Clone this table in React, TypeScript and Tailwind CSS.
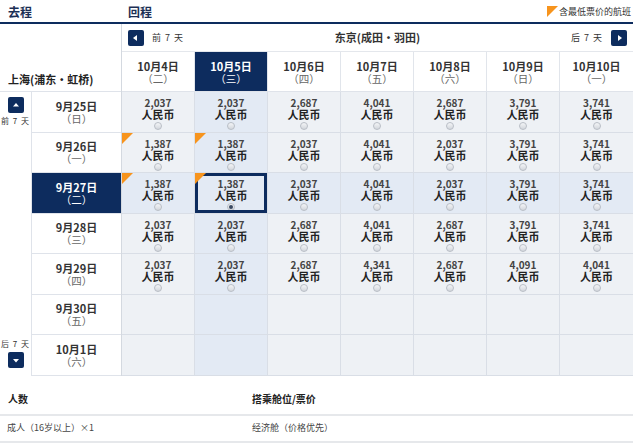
import React from "react";

const cols = [
  ["10月4日", "（二）"],
  ["10月5日", "（三）"],
  ["10月6日", "（四）"],
  ["10月7日", "（五）"],
  ["10月8日", "（六）"],
  ["10月9日", "（日）"],
  ["10月10日", "（一）"],
];

type Cell = { p: string; tri?: boolean } | null;

const rows: { d: string; w: string; cells: Cell[] }[] = [
  { d: "9月25日", w: "（日）", cells: ["2,037", "2,037", "2,687", "4,041", "2,687", "3,791", "3,741"].map((p) => ({ p })) },
  {
    d: "9月26日",
    w: "（一）",
    cells: [{ p: "1,387", tri: true }, { p: "1,387", tri: true }, { p: "2,037" }, { p: "4,041" }, { p: "2,037" }, { p: "3,791" }, { p: "3,741" }],
  },
  {
    d: "9月27日",
    w: "（二）",
    cells: [{ p: "1,387", tri: true }, { p: "1,387", tri: true }, { p: "2,037" }, { p: "4,041" }, { p: "2,037" }, { p: "3,791" }, { p: "3,741" }],
  },
  { d: "9月28日", w: "（三）", cells: ["2,037", "2,037", "2,687", "4,041", "2,687", "3,791", "3,741"].map((p) => ({ p })) },
  { d: "9月29日", w: "（四）", cells: ["2,037", "2,037", "2,687", "4,341", "2,687", "4,091", "4,041"].map((p) => ({ p })) },
  { d: "9月30日", w: "（五）", cells: [null, null, null, null, null, null, null] },
  { d: "10月1日", w: "（六）", cells: [null, null, null, null, null, null, null] },
];

const SEL_ROW = 2;
const SEL_COL = 1;

function Radio({ on }: { on?: boolean }) {
  return (
    <div className="w-[8px] h-[8px] rounded-full border border-[#b9bec6] bg-gradient-to-b from-[#f4f5f7] to-[#d3d7dd] flex items-center justify-center">
      {on && <div className="w-[4px] h-[4px] rounded-full bg-[#3a4a62]" />}
    </div>
  );
}

function Tri() {
  return (
    <svg className="absolute left-0 top-0" width="11" height="11" viewBox="0 0 11 11">
      <polygon points="0,0 11,0 0,11" fill="#f7941d" />
    </svg>
  );
}

function NavBtn({ dir }: { dir: "l" | "r" | "u" | "d" }) {
  const pts =
    dir === "l" ? "9,5 9,11 5,8" : dir === "r" ? "7,5 7,11 11,8" : dir === "u" ? "5,9.5 11,9.5 8,6" : "5,7 11,7 8,10.5";
  return (
    <div className="w-[16px] h-[16px] rounded-[2px] bg-[#0d2c5e] flex items-center justify-center">
      <svg width="16" height="16" viewBox="0 0 16 16">
        <polygon points={pts} fill="#fff" />
      </svg>
    </div>
  );
}

export default function App() {
  return (
    <div
      className="w-[640px] h-[447px] bg-white overflow-hidden text-[#333]"
      style={{ fontFamily: '"Noto Sans CJK SC", "Noto Sans", sans-serif' }}
    >
      {/* top header */}
      <div className="w-[633px] h-[24px] flex items-end border-b-2 border-[#0d2c5e]">
        <div className="w-[122px] pl-[8px] pb-[4px] text-[12px] font-bold text-[#1c2f55] leading-none">去程</div>
        <div className="flex-1 pl-[6px] pb-[4px] text-[12px] font-bold text-[#1c2f55] leading-none">回程</div>
        <div className="flex items-center pb-[5px] pr-[2px]">
          <svg width="11" height="11" viewBox="0 0 11 11" className="mr-[1px]">
            <polygon points="0,0 11,0 0,11" fill="#f7941d" />
          </svg>
          <span className="text-[9px] leading-none text-[#333]">含最低票价的航班</span>
        </div>
      </div>

      <div className="flex w-[633px]">
        {/* left */}
        <div className="w-[122px] border-r border-[#d4d9e0]">
          <div className="h-[68px] border-b border-[#dfe3ea] flex items-end pl-[8px] pb-[6px]">
            <span className="text-[11px] font-bold text-[#222] leading-none">上海(浦东・虹桥)</span>
          </div>
          <div className="flex">
            <div className="w-[32px] border-r border-[#dfe3ea] flex flex-col justify-between items-center pt-[5px] pb-[8px] h-[283.5px]">
              <div className="flex flex-col items-center">
                <NavBtn dir="u" />
                <span className="text-[8px] mt-[4px] text-[#333] tracking-[1px] leading-none">前 7 天</span>
              </div>
              <div className="flex flex-col items-center">
                <span className="text-[8px] mb-[4px] text-[#333] tracking-[1px] leading-none">后 7 天</span>
                <NavBtn dir="d" />
              </div>
            </div>
            <div className="flex-1">
              {rows.map((r, i) => (
                <div
                  key={i}
                  className={`h-[40.5px] border-b border-[#dfe3ea] flex flex-col items-center justify-center pt-[1px] ${
                    i === SEL_ROW ? "bg-[#0d2c5e]" : "bg-white"
                  }`}
                >
                  <span className={`text-[11px] leading-[12px] font-bold ${i === SEL_ROW ? "text-white" : "text-[#333]"}`}>{r.d}</span>
                  <span className={`text-[10.5px] leading-[13px] ${i === SEL_ROW ? "text-white" : "text-[#666]"}`}>{r.w}</span>
                </div>
              ))}
            </div>
          </div>
        </div>

        {/* right */}
        <div className="w-[511px]">
          <div className="h-[28px] flex items-center justify-between border-b border-[#e4e7ec] pl-[6px] pr-[6px]">
            <div className="flex items-center gap-[8px]">
              <NavBtn dir="l" />
              <span className="text-[9px] tracking-[1px] text-[#333]">前 7 天</span>
            </div>
            <span className="text-[11px] font-bold text-[#333]">东京(成田・羽田)</span>
            <div className="flex items-center gap-[8px]">
              <span className="text-[9px] tracking-[1px] text-[#333]">后 7 天</span>
              <NavBtn dir="r" />
            </div>
          </div>
          <div className="grid grid-cols-7 h-[40px] border-b border-[#dfe3ea]">
            {cols.map((c, j) => (
              <div
                key={j}
                className={`flex flex-col items-center justify-center pt-[2px] border-r border-[#e1e5eb] ${
                  j === SEL_COL ? "bg-[#0d2c5e]" : "bg-white"
                } ${j === 6 ? "border-r-0" : ""}`}
              >
                <span className={`text-[11px] leading-[12px] font-bold ${j === SEL_COL ? "text-white" : "text-[#333]"}`}>{c[0]}</span>
                <span className={`text-[10.5px] leading-[13px] ${j === SEL_COL ? "text-white" : "text-[#666]"}`}>{c[1]}</span>
              </div>
            ))}
          </div>
          {rows.map((r, i) => (
            <div key={i} className="grid grid-cols-7 h-[40.5px]">
              {r.cells.map((c, j) => {
                const sel = i === SEL_ROW && j === SEL_COL;
                const hl = i === SEL_ROW || j === SEL_COL;
                return (
                  <div
                    key={j}
                    className={`relative border-r border-b border-[#d9dee6] ${hl ? "bg-[#e3eaf4]" : "bg-[#eef1f5]"} ${
                      j === 6 ? "border-r-0" : ""
                    }`}
                  >
                    {sel && <div className="absolute inset-0 border-[3px] border-[#0d2c5e]" />}
                    {c && c.tri && <Tri />}
                    {c && (
                      <div className="flex flex-col items-center pt-[5px]">
                        <span className="text-[10px] leading-[11px] text-[#444] font-semibold">{c.p}</span>
                        <span className="text-[11px] leading-[12px] font-bold text-[#222]">人民币</span>
                        <div className="mt-[2px]">
                          <Radio on={sel} />
                        </div>
                      </div>
                    )}
                  </div>
                );
              })}
            </div>
          ))}
        </div>
      </div>

      {/* bottom */}
      <div className="w-[633px] mt-[12px]">
        <div className="flex h-[28px] items-center pb-[5px] border-b-2 border-[#e6e8eb]">
          <div className="w-[252px] pl-[8px] text-[10px] font-bold text-[#222]">人数</div>
          <div className="text-[10px] font-bold text-[#222]">搭乘舱位/票价</div>
        </div>
        <div className="flex h-[27px] items-center border-b-2 border-[#e6e8eb]">
          <div className="w-[252px] pl-[7px] text-[9px] text-[#444]">成人（16岁以上）×1</div>
          <div className="text-[9px] text-[#444]">经济舱（价格优先）</div>
        </div>
      </div>
    </div>
  );
}
